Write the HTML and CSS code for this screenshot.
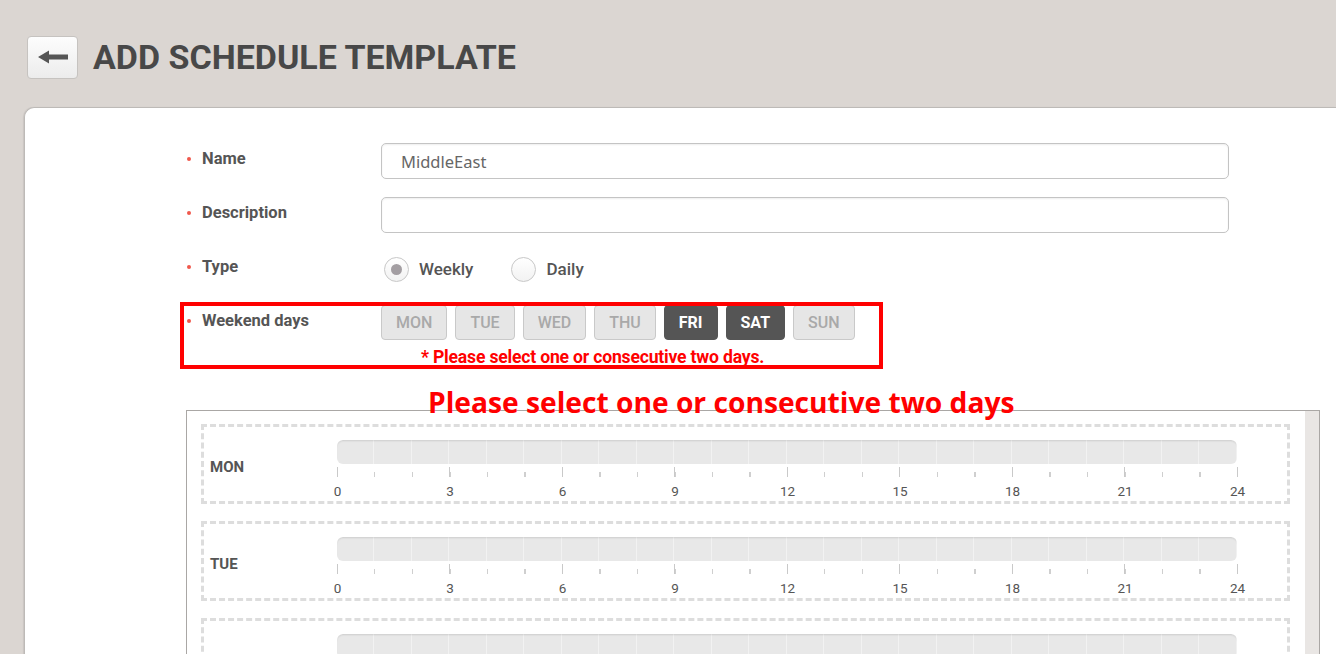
FILE: index.html
```html
<!DOCTYPE html>
<html lang="en">
<head>
<meta charset="utf-8">
<title>Add Schedule Template</title>
<link rel="stylesheet" href="styles.css">
</head>
<body>
<header class="page-head">
  <button class="back-btn" type="button" aria-label="Back">
    <svg width="30" height="14" viewBox="0 0 30 14"><path d="M0 7 L11 0.5 V4.5 H30 V9.5 H11 V13.5 Z" fill="#555"/></svg>
  </button>
  <h1 class="page-title">ADD SCHEDULE TEMPLATE</h1>
</header>
<main class="card">
  <form class="form">
    <div class="row">
      <label class="lbl"><span class="req"></span>Name</label>
      <div class="field"><input class="txt" type="text" value="MiddleEast"></div>
    </div>
    <div class="row">
      <label class="lbl"><span class="req"></span>Description</label>
      <div class="field"><input class="txt" type="text" value=""></div>
    </div>
    <div class="row row-type">
      <label class="lbl"><span class="req"></span>Type</label>
      <div class="field radios">
        <span class="radio checked"></span><span class="radio-text">Weekly</span>
        <span class="radio"></span><span class="radio-text">Daily</span>
      </div>
    </div>
    <div class="row row-weekend">
      <label class="lbl"><span class="req"></span>Weekend days</label>
      <div class="field">
        <div class="days">
          <span class="day">MON</span>
          <span class="day">TUE</span>
          <span class="day">WED</span>
          <span class="day">THU</span>
          <span class="day on">FRI</span>
          <span class="day on">SAT</span>
          <span class="day">SUN</span>
        </div>
        <p class="note">* Please select one or consecutive two days.</p>
      </div>
      <div class="annot-box"></div>
    </div>
  </form>

  <section class="sched-wrap">
    <p class="annot-text">Please select one or consecutive two days</p>
    <div class="sched">
      <div class="sched-list">
        <div class="dayrow">
          <div class="dayname">MON</div>
          <div class="timeline">
            <div class="bar"></div>
            <div class="ticks"></div>
            <div class="hours"><span>0</span><span>3</span><span>6</span><span>9</span><span>12</span><span>15</span><span>18</span><span>21</span><span>24</span></div>
          </div>
        </div>
        <div class="dayrow">
          <div class="dayname">TUE</div>
          <div class="timeline">
            <div class="bar"></div>
            <div class="ticks"></div>
            <div class="hours"><span>0</span><span>3</span><span>6</span><span>9</span><span>12</span><span>15</span><span>18</span><span>21</span><span>24</span></div>
          </div>
        </div>
        <div class="dayrow">
          <div class="dayname">WED</div>
          <div class="timeline">
            <div class="bar"></div>
            <div class="ticks"></div>
            <div class="hours"><span>0</span><span>3</span><span>6</span><span>9</span><span>12</span><span>15</span><span>18</span><span>21</span><span>24</span></div>
          </div>
        </div>
      </div>
      <div class="track"></div>
    </div>
  </section>
</main>
</body>
</html>
```
FILE: styles.css
```css
html, body {
  margin: 0;
  height: 100%;
  overflow: hidden;
}
body {
  background: #dbd6d2;
  font-family: Roboto, "Liberation Sans", sans-serif;
  color: #555;
}
.page-head {
  display: flex;
  align-items: center;
  padding: 36px 0 0 27px;
  height: 43px;
}
.back-btn {
  width: 51px;
  height: 43px;
  border: 1px solid #c6c3c0;
  border-radius: 4px;
  background: linear-gradient(#fdfdfd, #ececec);
  display: flex;
  align-items: center;
  justify-content: center;
  padding: 0 0 2px 0;
  box-sizing: border-box;
}
.page-title {
  margin: 0 0 0 15px;
  font-size: 34px;
  font-weight: 700;
  color: #484848;
  letter-spacing: 0;
  line-height: 43px;
}
.card {
  margin: 28px 0 0 24px;
  background: #fff;
  border: 1px solid #bdbab7;
  border-right: none;
  border-bottom: none;
  border-top-left-radius: 10px;
  box-shadow: -1px 0 1px rgba(0,0,0,0.08);
  padding: 35px 0 0 162px;
  height: 700px;
}
.form {
  position: relative;
}
.row {
  display: grid;
  grid-template-columns: 194px 848px;
  margin-bottom: 18px;
  position: relative;
}
.lbl {
  display: flex;
  align-items: center;
  font-size: 16.5px;
  font-weight: 700;
  line-height: 18px;
  height: 18px;
  padding-top: 7px;
  color: #555;
}
.req {
  width: 4px;
  height: 4px;
  border-radius: 50%;
  background: #f0584c;
  margin-right: 11px;
}
.txt {
  box-sizing: border-box;
  width: 848px;
  height: 36px;
  border: 1px solid #c4c4c4;
  border-radius: 5px;
  box-shadow: inset 0 1px 2px rgba(0,0,0,0.07);
  padding: 0 0 0 19px;
  font-family: "Noto Sans", "Open Sans", sans-serif;
  font-size: 16.5px;
  color: #666;
  outline: none;
}
.radios {
  display: flex;
  align-items: center;
  height: 36px;
}
.radio {
  box-sizing: border-box;
  width: 25px;
  height: 25px;
  border: 1px solid #c8c8c8;
  border-radius: 50%;
  background: linear-gradient(#fff, #f2f2f2);
  margin-left: 3px;
  display: flex;
  align-items: center;
  justify-content: center;
}
.radio.checked::after {
  content: "";
  width: 11px;
  height: 11px;
  border-radius: 50%;
  background: #a39ea2;
}
.radio-text {
  font-size: 17px;
  font-weight: 500;
  color: #555;
  margin-left: 10px;
  margin-right: 35px;
}
.row-weekend {
  margin-bottom: 0;
}
.days {
  display: flex;
  gap: 8px;
}
.day {
  box-sizing: border-box;
  height: 35px;
  padding: 0 14px;
  border: 1px solid #c9c9c9;
  border-radius: 4px;
  background: #e6e6e6;
  color: #a9a9a9;
  font-size: 16px;
  font-weight: 500;
  display: flex;
  align-items: center;
}
.day.on {
  background: #555;
  border-color: #555;
  color: #fff;
  font-weight: 700;
}
.note {
  margin: 8px 0 0 40px;
  font-size: 17.6px;
  line-height: 18px;
  font-weight: 700;
  color: #f00;
  letter-spacing: -0.2px;
}
.annot-box {
  position: absolute;
  left: -7px;
  top: -3px;
  width: 703px;
  height: 67px;
  box-sizing: border-box;
  border: 4px solid #ff0000;
  pointer-events: none;
}
.sched-wrap {
  position: relative;
  margin: 44px 0 0 -1px;
  width: 1134px;
}
.annot-text {
  position: absolute;
  left: 242px;
  top: -23px;
  margin: 0;
  font-family: "Open Sans", "Noto Sans", sans-serif;
  font-size: 28.2px;
  line-height: 30px;
  font-weight: 700;
  color: #ff0000;
  white-space: nowrap;
  z-index: 2;
}
.sched {
  display: flex;
  border: 1px solid #aaa7a5;
  height: 400px;
  background: #fff;
}
.sched-list {
  flex: 1;
  padding: 13px 0 0 14px;
  display: flex;
  flex-direction: column;
  gap: 17px;
}
.track {
  width: 14px;
  background: #e9e6e4;
  margin-left: 15px;
}
.dayrow {
  box-sizing: border-box;
  width: 1089px;
  height: 80px;
  border: 3px dashed #dddddd;
  padding: 13px 0 0 6px;
  display: flex;
  align-items: flex-start;
}
.dayname {
  width: 127px;
  margin-top: 19px;
  font-size: 15px;
  line-height: 17px;
  font-weight: 700;
  color: #555;
}
.timeline {
  width: 901px;
}
.bar {
  width: 900px;
  height: 24px;
  border-radius: 6px;
  background-color: #e8e8e8;
  background-image: repeating-linear-gradient(to right, transparent 0, transparent 36.5px, #f2f2f2 36.5px, #f2f2f2 37.5px);
  box-shadow: inset 0 2px 2px -1px rgba(0,0,0,0.12);
}
.ticks {
  margin-top: 3px;
  width: 901px;
  height: 10px;
  background:
    repeating-linear-gradient(to right, #c9c9c9 0, #c9c9c9 1px, transparent 1px, transparent 112.5px) top left / 901px 10px no-repeat,
    repeating-linear-gradient(to right, #cfcfcf 0, #cfcfcf 1px, transparent 1px, transparent 37.5px) bottom left / 901px 5px no-repeat;
}
.hours {
  margin-top: 7px;
  width: 901px;
  display: flex;
  justify-content: space-between;
  font-size: 13.5px;
  line-height: 15px;
  color: #555;
}
.hours span {
  width: 1px;
  display: flex;
  justify-content: center;
  white-space: nowrap;
}
```
